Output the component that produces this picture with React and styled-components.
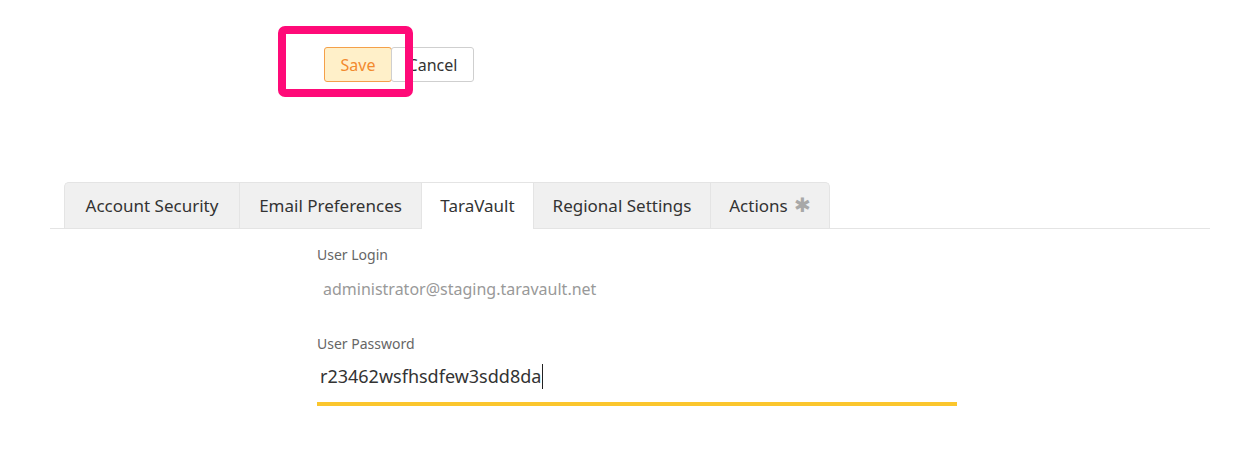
import React from "react";
import styled, { createGlobalStyle } from "styled-components";

const Global = createGlobalStyle`
  body {
    margin: 0;
    background: #fff;
    font-family: "Noto Sans", "Open Sans", sans-serif;
    color: #333;
  }
`;

const Page = styled.div`
  width: 1238px;
  height: 468px;
  position: relative;
`;

const Toolbar = styled.div`
  display: flex;
  padding: 47px 0 0 324px;
  height: 35px;
`;

const Button = styled.button`
  height: 35px;
  width: ${(p) => (p.$primary ? "68px" : "83px")};
  padding: 0;
  font-family: inherit;
  font-size: 16px;
  border-radius: 3px;
  border: 1px solid ${(p) => (p.$primary ? "#f4a04a" : "#cfcfcf")};
  background: ${(p) => (p.$primary ? "#fff0c9" : "#fff")};
  color: ${(p) => (p.$primary ? "#f28a2e" : "#333")};
  margin-left: ${(p) => (p.$primary ? "0" : "-1px")};
  cursor: pointer;
`;

const Highlight = styled.div`
  position: absolute;
  left: 278px;
  top: 26px;
  width: 135px;
  height: 71px;
  box-sizing: border-box;
  border: 8px solid #ff0a78;
  border-radius: 7px;
  pointer-events: none;
`;

const TabBar = styled.div`
  display: flex;
  margin: 100px 0 0 50px;
  width: 1160px;
  padding-left: 14px;
  box-sizing: border-box;
  border-bottom: 1px solid #e4e4e4;
`;

const Tab = styled.div`
  display: flex;
  align-items: center;
  justify-content: center;
  gap: 6px;
  width: ${(p) => p.$w}px;
  padding-bottom: 1px;
  font-size: 17px;
  color: #333;
  background: ${(p) => (p.$active ? "#fff" : "#f0f0f0")};
  border-top: 1px solid #e4e4e4;
  border-left: 1px solid #e4e4e4;
  margin-bottom: ${(p) => (p.$active ? "-1px" : "0")};
  box-sizing: border-box;
  height: ${(p) => (p.$active ? "47px" : "46px")};

  &:first-child {
    border-top-left-radius: 5px;
  }
  &:last-child {
    border-right: 1px solid #e4e4e4;
    border-top-right-radius: 5px;
  }
`;

const Star = styled.span`
  color: #a8a8a8;
  font-size: 20px;
  line-height: 1;
`;

const Form = styled.div`
  padding: 16px 0 0 317px;
  display: flex;
  flex-direction: column;
`;

const Label = styled.div`
  font-size: 14px;
  color: #666;
  line-height: 19px;
`;

const Value = styled.div`
  font-size: 16px;
  color: #999;
  padding: 14px 0 0 6px;
  line-height: 22px;
  margin-bottom: 34px;
`;

const Input = styled.div`
  width: 640px;
  box-sizing: border-box;
  font-size: 18px;
  color: #333;
  padding: 11px 0 13px 3px;
  line-height: 25px;
  border-bottom: 4px solid #fbc62d;
  display: flex;
  align-items: center;
`;

const Caret = styled.span`
  display: inline-block;
  width: 1px;
  height: 25px;
  background: #222;
  margin-left: 1px;
`;

export default function App() {
  return (
    <Page>
      <Global />
      <Toolbar>
        <Button $primary>Save</Button>
        <Button>Cancel</Button>
      </Toolbar>
      <Highlight />
      <TabBar>
        <Tab $w={175}>Account Security</Tab>
        <Tab $w={182}>Email Preferences</Tab>
        <Tab $w={112} $active>
          TaraVault
        </Tab>
        <Tab $w={177}>Regional Settings</Tab>
        <Tab $w={120}>
          Actions <Star>✱</Star>
        </Tab>
      </TabBar>
      <Form>
        <Label>User Login</Label>
        <Value>administrator@staging.taravault.net</Value>
        <Label>User Password</Label>
        <Input>
          r23462wsfhsdfew3sdd8da
          <Caret />
        </Input>
      </Form>
    </Page>
  );
}
